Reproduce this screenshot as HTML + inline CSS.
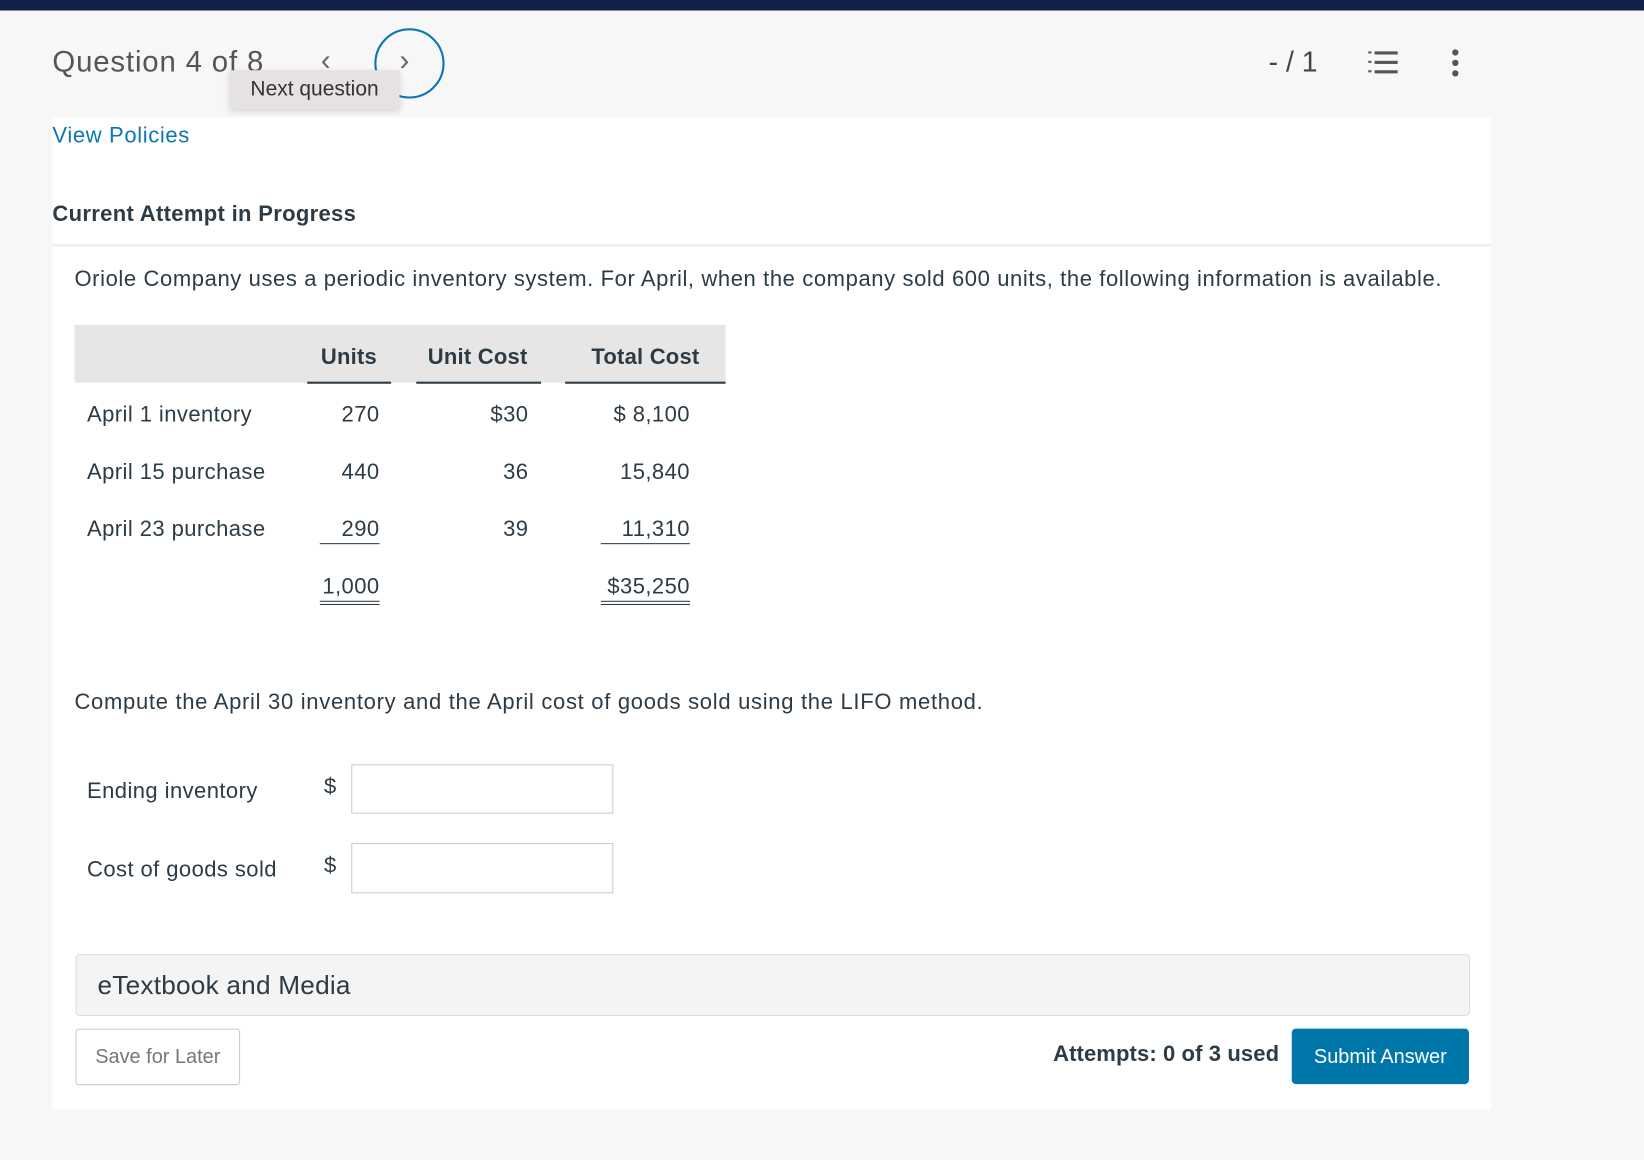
<!DOCTYPE html>
<html><head><meta charset="utf-8"><style>
html,body{margin:0;padding:0;width:1644px;height:1160px;overflow:hidden;background:#f7f7f7;}
#w{position:absolute;left:0;top:0;width:1568px;height:1106px;transform:scale(1.0485);transform-origin:0 0;font-family:"Liberation Sans",sans-serif;color:#2d3b45;}
.a{position:absolute;white-space:nowrap;}
.t{font-size:21px;letter-spacing:0.4px;margin-top:2px;}
.r{text-align:right;}
</style></head><body><div id="w">
<div class="a" style="left:0;top:0;width:1568px;height:10px;background:#13204a"></div>
<div class="a" style="left:50px;top:112px;width:1372px;height:946px;background:#fff"></div>
<div class="a" style="left:50px;top:43px;font-size:28px;color:#555;letter-spacing:0.8px">Question 4 of 8</div>
<div class="a" style="left:306px;top:42px;font-size:28px;color:#666">&#8249;</div>
<div class="a" style="left:357px;top:27px;width:63px;height:63px;border:2.5px solid #0a77b0;border-radius:50%"></div>
<div class="a" style="left:381px;top:42px;font-size:28px;color:#666">&#8250;</div>
<div class="a" style="left:219px;top:67px;width:162px;height:37px;background:#e6e1e3;box-shadow:0 2px 6px rgba(0,0,0,.15);font-size:20px;line-height:37px;text-align:center;color:#333">Next question</div>
<div class="a" style="left:1210px;top:44px;font-size:27px;color:#444">- / 1</div>
<svg class="a" style="left:1303px;top:46px" width="32" height="28"><g fill="#555"><rect x="8" y="3" width="22" height="3"/><rect x="8" y="12" width="22" height="3"/><rect x="8" y="21" width="22" height="3"/><rect x="2" y="3" width="3" height="2"/><rect x="2" y="12" width="3" height="2"/><rect x="2" y="21" width="3" height="2"/></g></svg>
<svg class="a" style="left:1382px;top:46px" width="12" height="28"><g fill="#555"><circle cx="6" cy="4" r="3"/><circle cx="6" cy="14" r="3"/><circle cx="6" cy="24" r="3"/></g></svg>
<div class="a t" style="left:50px;top:116px;color:#0d75b0;letter-spacing:0.6px">View Policies</div>
<div class="a t" style="left:50px;top:191px;font-weight:bold;letter-spacing:0.3px">Current Attempt in Progress</div>
<div class="a" style="left:50px;top:233px;width:1372px;height:2px;background:#ececec"></div>
<div class="a t" style="left:71px;top:253px;letter-spacing:0.57px">Oriole Company uses a periodic inventory system. For April, when the company sold 600 units, the following information is available.</div>
<div class="a" style="left:71px;top:310px;width:621px;height:55px;background:#e6e6e6"></div>
<div class="a t" style="left:306px;top:327px;font-weight:bold;letter-spacing:0.2px">Units</div>
<div class="a t" style="left:408px;top:327px;font-weight:bold;letter-spacing:0.2px">Unit Cost</div>
<div class="a t" style="left:564px;top:327px;font-weight:bold;letter-spacing:0.2px">Total Cost</div>
<div class="a" style="left:293px;top:364px;width:80px;height:1.5px;background:#2d3b45"></div>
<div class="a" style="left:397px;top:364px;width:119px;height:1.5px;background:#2d3b45"></div>
<div class="a" style="left:539px;top:364px;width:153px;height:1.5px;background:#2d3b45"></div>
<div class="a t" style="left:83px;top:382px">April 1 inventory</div>
<div class="a t" style="left:83px;top:437px">April 15 purchase</div>
<div class="a t" style="left:83px;top:491px">April 23 purchase</div>
<div class="a t r" style="left:262px;width:100px;top:382px">270</div>
<div class="a t r" style="left:262px;width:100px;top:437px">440</div>
<div class="a t r" style="left:305px;width:57px;top:491px;padding-bottom:1px;border-bottom:1.5px solid #2d3b45">290</div>
<div class="a t r" style="left:305px;width:57px;top:546px;padding-bottom:1px;border-bottom:4px double #2d3b45">1,000</div>
<div class="a t r" style="left:404px;width:100px;top:382px">$30</div>
<div class="a t r" style="left:404px;width:100px;top:437px">36</div>
<div class="a t r" style="left:404px;width:100px;top:491px">39</div>
<div class="a t r" style="left:558px;width:100px;top:382px">$ 8,100</div>
<div class="a t r" style="left:558px;width:100px;top:437px">15,840</div>
<div class="a t r" style="left:573px;width:85px;top:491px;padding-bottom:1px;border-bottom:1.5px solid #2d3b45">11,310</div>
<div class="a t r" style="left:573px;width:85px;top:546px;padding-bottom:1px;border-bottom:4px double #2d3b45">$35,250</div>
<div class="a t" style="left:71px;top:656px;letter-spacing:0.66px">Compute the April 30 inventory and the April cost of goods sold using the LIFO method.</div>
<div class="a t" style="left:83px;top:741px">Ending inventory</div>
<div class="a t" style="left:309px;top:737px">$</div>
<div class="a" style="left:335px;top:729px;width:248px;height:45px;border:1px solid #ccc;background:#fff"></div>
<div class="a t" style="left:83px;top:816px">Cost of goods sold</div>
<div class="a t" style="left:309px;top:812px">$</div>
<div class="a" style="left:335px;top:804px;width:248px;height:46px;border:1px solid #ccc;background:#fff"></div>
<div class="a" style="left:72px;top:910px;width:1328px;height:57px;background:#f4f4f4;border:1px solid #ddd;border-radius:4px"></div>
<div class="a" style="left:93px;top:926px;font-size:25px;letter-spacing:0.2px">eTextbook and Media</div>
<div class="a" style="left:72px;top:981px;width:155px;height:52px;border:1px solid #ccc;border-radius:3px;background:#fff;color:#777;font-size:19px;line-height:54px;text-align:center">Save for Later</div>
<div class="a t r" style="left:900px;width:320px;top:992px;font-weight:bold;letter-spacing:0.1px">Attempts: 0 of 3 used</div>
<div class="a" style="left:1232px;top:981px;width:169px;height:53px;background:#0077ab;border-radius:4px;color:#fff;font-size:19px;line-height:55px;text-align:center">Submit Answer</div>
</div></body></html>
